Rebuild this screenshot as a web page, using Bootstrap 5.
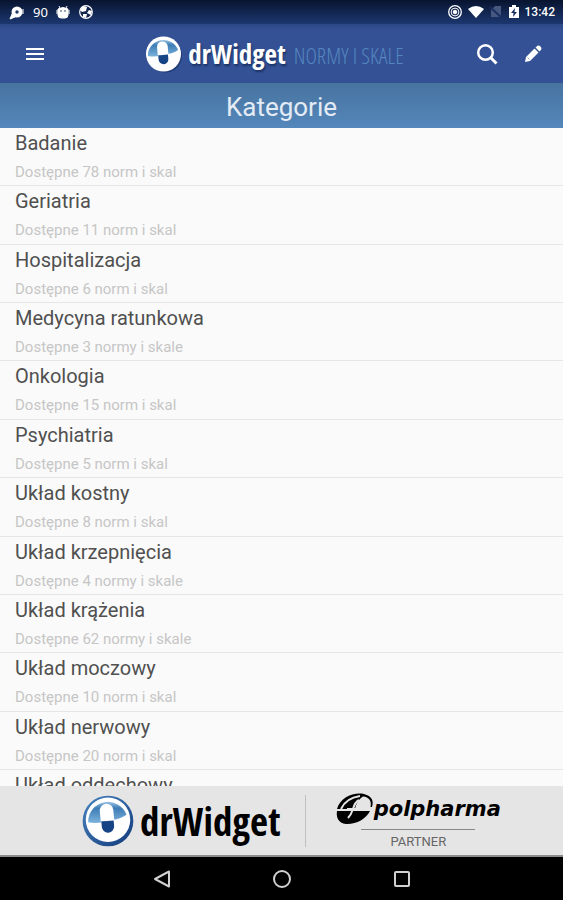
<!DOCTYPE html>
<html lang="pl">
<head>
<meta charset="utf-8">
<meta name="viewport" content="width=device-width, initial-scale=1">
<title>drWidget – Normy i skale</title>
<link href="https://cdn.jsdelivr.net/npm/bootstrap@5.3.0/dist/css/bootstrap.min.css" rel="stylesheet">
<style>
body{font-family:Roboto,"Noto Sans",sans-serif;background:#fafafa}
svg{display:block;flex:none}
.status{height:24px;padding:0 8px 0 9px;background:linear-gradient(#08142f,#1c3770);color:#fff;font-size:12px;line-height:24px}
.status .count{font-family:"Noto Sans",sans-serif;font-size:13px}
.topbar{height:59px;background:linear-gradient(#2c4885,#335194 6px);padding:0 7px 0 12px}
.side{flex:1 1 0}
.tool{width:46px;height:46px;padding:0;border:0;background:none;color:#fff;display:flex;align-items:center;justify-content:center}
.brand{color:#fff;text-decoration:none;margin-right:19px;gap:6px}
.wordmark{font-family:"Open Sans Condensed","Liberation Sans Narrow",sans-serif;font-weight:700;line-height:1}
.brand .wordmark{font-size:27px;text-shadow:1px 2px 2px #1b3266}
.tagline{font-family:"Open Sans Condensed Light","Open Sans Condensed",sans-serif;font-weight:300;font-size:22px;line-height:1;color:#5586c0;padding:2px 0 0 2px}
.heading{height:45px;margin:0;background:linear-gradient(#47739f,#5487bb);color:#e3ebf4;font-size:26px;font-weight:400;line-height:48px}
.cats{min-height:0;overflow:hidden}
.cat{flex:1 1 0;padding:0 15px;color:#505050;text-decoration:none;border-bottom:1px solid #e6e6e6;overflow:hidden}
.cat:last-child{flex:0 0 16px;border:0}
.cat-name{font-size:20px;line-height:31px}
.cat-info{font-size:15px;line-height:26px;color:#c6c6c6}
.sponsors{height:71px;background:#e5e5e5;border-bottom:2px solid #8c8c8c;padding-left:20px;color:#000}
.sponsors .logo{gap:6px}
.sponsors .wordmark{font-size:39px}
.rule{width:1px;height:52px;background:#c0c0c0;margin:0 30px 0 24px}
.pol{font-family:"DejaVu Sans",sans-serif;font-weight:700;font-style:italic;font-size:21px;line-height:28px}
.partner{font-size:13px;line-height:16px;color:#666;border-top:1px solid #888;padding:4px 29px 0;margin-top:3px}
.navkeys{height:43px;background:#000;gap:96px}
.navkeys .tool{width:24px;height:24px}
</style>
<script src="https://cdn.jsdelivr.net/npm/bootstrap@5.3.0/dist/js/bootstrap.bundle.min.js"></script>
</head>
<body class="vh-100 d-flex flex-column overflow-hidden">
<svg width="0" height="0" class="position-absolute" aria-hidden="true">
<defs>
<linearGradient id="sky" x1="0" y1="0" x2="0" y2="1"><stop offset="0" stop-color="#9cc4e4"/><stop offset=".3" stop-color="#3d7cb5"/><stop offset="1" stop-color="#7db3dc"/></linearGradient>
<linearGradient id="deep" x1="0" y1="0" x2="1" y2="1"><stop offset="0" stop-color="#4a85bf"/><stop offset="1" stop-color="#123a7c"/></linearGradient>
<symbol id="pill" viewBox="0 0 40 40">
<circle cx="20" cy="20" r="18" fill="#fff"/>
<path d="M4 22A16 16 0 0 1 35 16Q29 20 23 20Q12 24 4 22Z" fill="url(#sky)"/>
<g transform="rotate(-5 20 20)">
<path d="M14 21V12.500a5.500 5.500 0 0 1 11 0V21Z" fill="#fff"/>
<path d="M14.500 21H24.500v4.500a5 5 0 0 1-10 0Z" fill="#174485"/>
</g>
</symbol>
</defs>
</svg>

<div class="status d-flex align-items-center justify-content-between">
<div class="d-flex align-items-center">
<svg width="16" height="16" viewBox="0 0 16 16"><circle cx="8" cy="8" r="5.5" fill="#fff"/><path d="M3 10l-2 5 5-2M14 5v5" fill="#fff" stroke="#fff"/><circle cx="8" cy="8" r="1.7" fill="#203764"/></svg>
<span class="count ms-2 me-2">90</span>
<svg width="14" height="16" viewBox="0 0 14 16"><path d="M2 5Q7 2 12 5v6Q12 14 9 14H5Q2 14 2 11ZM4 4L3 2M10 4l1-2M1 6v4M13 6v4" fill="#fff" stroke="#fff"/><circle cx="5" cy="7" r=".8" fill="#203764"/><circle cx="9" cy="7" r=".8" fill="#203764"/></svg>
<svg class="ms-2" width="16" height="16" viewBox="0 0 16 16"><circle cx="8" cy="8" r="6.3" fill="#142650" stroke="#fff" stroke-width="1.2"/><path d="M5 2l4 1-1 4-4 1-2-2ZM11 6l3 1-1 4-4-2ZM5 10l4 0-1 4-3-1Z" fill="#fff"/></svg>
</div>
<div class="d-flex align-items-center">
<svg width="16" height="16" viewBox="0 0 16 16" fill="none" stroke="#fff"><circle cx="8" cy="8" r="6.3" stroke-width="1.3"/><circle cx="8" cy="8" r="3.9"/><circle cx="8" cy="8" r="1.8" fill="#fff"/></svg>
<svg class="ms-1" width="18" height="16" viewBox="0 0 18 16"><path d="M1 5Q9-1 17 5L9 14Z" fill="#fff"/></svg>
<svg class="ms-1" width="14" height="16" viewBox="0 0 14 16"><path d="M2 13V6l4-4h6v11Z" fill="#46587f"/><path d="M1 3l12 11" stroke="#1a3062" stroke-width="2"/></svg>
<svg class="ms-1" width="14" height="16" viewBox="0 0 14 16"><path d="M2 3h3V1h4v2h3v11H2Z" fill="#fff"/><path d="M8 4L4 9h2.500l-.5 4 4-5H7.500Z" fill="#1a3062"/></svg>
<span class="ms-1 fw-medium">13:42</span>
</div>
</div>

<header class="topbar d-flex align-items-center">
<div class="side d-flex">
<button class="tool" type="button" aria-label="Menu"><svg width="20" height="16" viewBox="0 0 20 16"><path d="M1 3H19M1 8H19M1 13H19" stroke="#fff" stroke-width="2"/></svg></button>
</div>
<a href="#" class="brand d-flex align-items-center">
<svg width="37" height="38" viewBox="1 1 38 38"><circle cx="22" cy="22" r="17" fill="#203c78"/><use href="#pill" width="40" height="40"/></svg>
<span class="wordmark">drWidget</span>
<span class="tagline">NORMY I SKALE</span>
</a>
<div class="side d-flex justify-content-end">
<button class="tool" type="button" aria-label="Szukaj"><svg width="24" height="24" viewBox="0 0 24 24" fill="none" stroke="#fff"><circle cx="10.500" cy="10.500" r="7.300" stroke-width="2.500"/><path d="M15.800 15.800L21.500 21.500" stroke-width="3"/></svg></button>
<button class="tool" type="button" aria-label="Edytuj"><svg width="20" height="20" viewBox="0 0 20 20"><path d="M2 18l1-5L11.500 4.500l4 4L7 17ZM12.500 3.500L14.500 1.700Q16 1 17.500 2.500T18.300 5.500L16.500 7.500Z" fill="#fff"/><path d="M4.500 13.500l2 2" stroke="#9aabc9"/></svg></button>
</div>
</header>
<h1 class="heading text-center flex-shrink-0">Kategorie</h1>

<main class="cats d-flex flex-column flex-fill">
<a class="cat" href="#"><div class="cat-name">Badanie</div><div class="cat-info">Dostępne 78 norm i skal</div></a>
<a class="cat" href="#"><div class="cat-name">Geriatria</div><div class="cat-info">Dostępne 11 norm i skal</div></a>
<a class="cat" href="#"><div class="cat-name">Hospitalizacja</div><div class="cat-info">Dostępne 6 norm i skal</div></a>
<a class="cat" href="#"><div class="cat-name">Medycyna ratunkowa</div><div class="cat-info">Dostępne 3 normy i skale</div></a>
<a class="cat" href="#"><div class="cat-name">Onkologia</div><div class="cat-info">Dostępne 15 norm i skal</div></a>
<a class="cat" href="#"><div class="cat-name">Psychiatria</div><div class="cat-info">Dostępne 5 norm i skal</div></a>
<a class="cat" href="#"><div class="cat-name">Układ kostny</div><div class="cat-info">Dostępne 8 norm i skal</div></a>
<a class="cat" href="#"><div class="cat-name">Układ krzepnięcia</div><div class="cat-info">Dostępne 4 normy i skale</div></a>
<a class="cat" href="#"><div class="cat-name">Układ krążenia</div><div class="cat-info">Dostępne 62 normy i skale</div></a>
<a class="cat" href="#"><div class="cat-name">Układ moczowy</div><div class="cat-info">Dostępne 10 norm i skal</div></a>
<a class="cat" href="#"><div class="cat-name">Układ nerwowy</div><div class="cat-info">Dostępne 20 norm i skal</div></a>
<a class="cat" href="#"><div class="cat-name">Układ oddechowy</div></a>
</main>

<footer class="flex-shrink-0">
<div class="sponsors d-flex align-items-center justify-content-center">
<div class="logo d-flex align-items-center">
<svg width="52" height="52" viewBox="0 0 40 40"><circle cx="20" cy="20" r="19.500" fill="url(#deep)"/><use href="#pill" x="1" y="0" width="38" height="38"/></svg>
<span class="wordmark">drWidget</span>
</div>
<div class="rule"></div>
<div class="d-flex flex-column align-items-center">
<div class="d-flex align-items-center">
<svg width="38" height="34" viewBox="0 0 38 34"><path d="M1 17C4 6 17 0 28 2C36 4 38 9 36 15H34.500C36 9 33 5 27 4.500C23 7 20 12 19 17Z" fill="#000"/><path d="M1 19H34C30 27 20 32.500 10 32C2 31 0 25 1 19Z" fill="#000"/><path d="M5 17Q10 6 24 4M12 26Q15 23 17 17Q19 10 23 8M11 17H24" fill="none" stroke="#e5e5e5" stroke-width="2"/></svg>
<span class="pol">polpharma</span>
</div>
<div class="partner">PARTNER</div>
</div>
</div>
<nav class="navkeys d-flex align-items-center justify-content-center" aria-label="System">
<button class="tool" type="button" aria-label="Wstecz"><svg width="20" height="20" viewBox="0 0 20 20"><path d="M3 10L17 2.500V17.500Z" fill="none" stroke="#d0d0d0" stroke-width="2" stroke-linejoin="round"/></svg></button>
<button class="tool" type="button" aria-label="Ekran główny"><svg width="20" height="20" viewBox="0 0 20 20"><circle cx="10" cy="10" r="8" fill="none" stroke="#d0d0d0" stroke-width="2"/></svg></button>
<button class="tool" type="button" aria-label="Ostatnie"><svg width="20" height="20" viewBox="0 0 20 20"><rect x="3" y="3" width="14" height="14" rx="1" fill="none" stroke="#d0d0d0" stroke-width="2"/></svg></button>
</nav>
</footer>
</body>
</html>
